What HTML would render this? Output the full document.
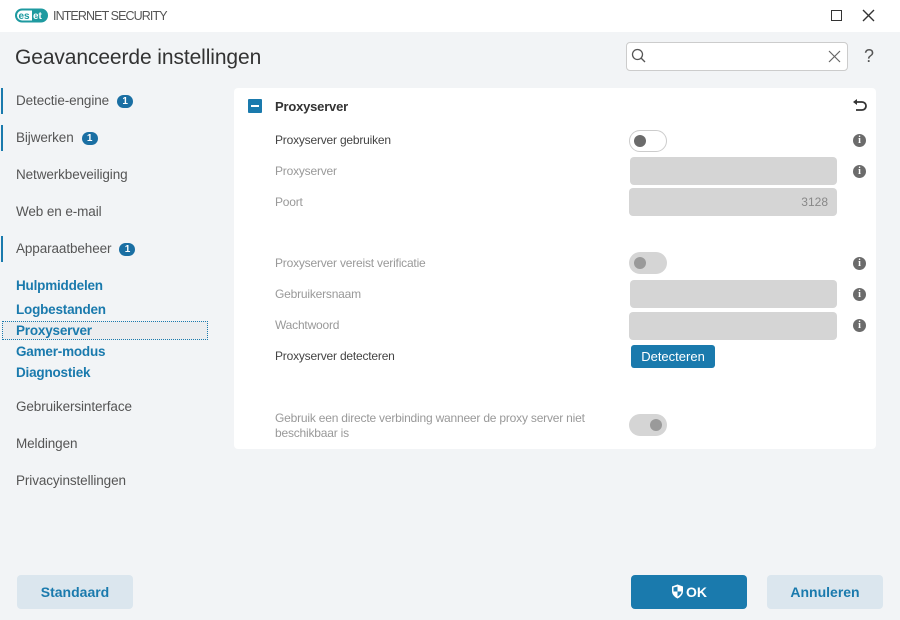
<!DOCTYPE html>
<html><head><meta charset="utf-8"><style>
*{margin:0;padding:0;box-sizing:border-box}
body{width:900px;height:620px;background:#f2f4f6;font-family:"Liberation Sans",sans-serif;position:relative;overflow:hidden;color:#3a3a3a}
.a{position:absolute;white-space:nowrap}
.nav{font-size:13.5px;color:#555;letter-spacing:-0.1px}
.bar{position:absolute;left:1px;width:2px;background:#1a7aad}
.badge{display:inline-block;background:#1a6fa3;color:#fff;font-size:10px;font-weight:bold;border-radius:7px;width:16px;height:13px;line-height:13px;text-align:center;margin-left:8px;vertical-align:1px}
.sub{font-size:13.5px;color:#1a7aad;font-weight:bold;letter-spacing:-0.2px}
.lbl{font-size:12px;letter-spacing:-0.2px;color:#999}
.dk{color:#444}
.inp{position:absolute;left:630px;width:207px;height:28px;background:#d5d5d5;border-radius:4px}
.info{position:absolute;left:853px;width:13px;height:13px;border-radius:50%;background:#6b6b6b;color:#fff;font:bold 10px/13px "Liberation Serif",serif;text-align:center}
.tg{position:absolute;left:629px;width:38px;height:22px;border-radius:11px}
.knob{position:absolute;top:5px;width:12px;height:12px;border-radius:50%}
.btn{position:absolute;height:34px;border-radius:4px;font-size:14px;font-weight:bold;text-align:center;line-height:34px}
</style></head><body>
<div class="a" style="left:0;top:0;width:900px;height:32px;background:#fff"></div>
<svg class="a" style="left:15px;top:8px" width="34" height="16" viewBox="0 0 34 16"><rect x="1" y="1.5" width="31" height="12" rx="6" fill="#fff" stroke="#1e9aa0" stroke-width="2"/><rect x="17" y="1.5" width="15" height="12" rx="6" fill="#1e9aa0"/><rect x="17" y="1.5" width="6" height="12" fill="#1e9aa0"/><text x="3.5" y="11" font-family="Liberation Sans" font-weight="bold" font-size="10" fill="#1e9aa0">es</text><text x="18" y="11" font-family="Liberation Sans" font-weight="bold" font-size="10" fill="#fff">et</text></svg>
<div class="a" style="left:53px;top:9px;font-size:12.5px;color:#555;letter-spacing:-0.9px">INTERNET SECURITY</div>
<div class="a" style="left:831px;top:10px;width:11px;height:11px;border:1.5px solid #333"></div>
<svg class="a" style="left:862px;top:9px" width="13" height="13"><path d="M1 1L12 12M12 1L1 12" stroke="#333" stroke-width="1.4"/></svg>

<div class="a" style="left:15px;top:46px;font-size:21px;color:#333;letter-spacing:-0.1px">Geavanceerde instellingen</div>
<div class="a" style="left:626px;top:42px;width:222px;height:29px;background:#fff;border:1px solid #ccc;border-radius:4px"></div>
<svg class="a" style="left:631px;top:48px" width="16" height="16"><circle cx="6.5" cy="6.5" r="5" fill="none" stroke="#555" stroke-width="1.3"/><line x1="10" y1="10" x2="14" y2="14" stroke="#555" stroke-width="1.3"/></svg>
<svg class="a" style="left:828px;top:50px" width="13" height="13"><path d="M1 1L12 12M12 1L1 12" stroke="#666" stroke-width="1.2"/></svg>
<div class="a" style="left:864px;top:46px;font-size:18px;color:#555">?</div>

<div class="bar" style="top:88px;height:26px"></div>
<div class="a nav" style="left:16px;top:93px">Detectie-engine<span class="badge">1</span></div>
<div class="bar" style="top:125px;height:26px"></div>
<div class="a nav" style="left:16px;top:130px">Bijwerken<span class="badge">1</span></div>
<div class="a nav" style="left:16px;top:167px">Netwerkbeveiliging</div>
<div class="a nav" style="left:16px;top:204px">Web en e-mail</div>
<div class="bar" style="top:236px;height:26px"></div>
<div class="a nav" style="left:16px;top:241px">Apparaatbeheer<span class="badge">1</span></div>
<div class="a sub" style="left:16px;top:278px">Hulpmiddelen</div>
<div class="a sub" style="left:16px;top:302px">Logbestanden</div>
<div class="a" style="left:2px;top:321px;width:206px;height:19px;background:#ebedef;border:1px dotted #1a7aad"></div>
<div class="a sub" style="left:16px;top:323px">Proxyserver</div>
<div class="a sub" style="left:16px;top:344px">Gamer-modus</div>
<div class="a sub" style="left:16px;top:365px">Diagnostiek</div>
<div class="a nav" style="left:16px;top:399px">Gebruikersinterface</div>
<div class="a nav" style="left:16px;top:436px">Meldingen</div>
<div class="a nav" style="left:16px;top:473px">Privacyinstellingen</div>

<div class="a" style="left:234px;top:88px;width:642px;height:361px;background:#fff;border-radius:4px"></div>
<div class="a" style="left:248px;top:99px;width:14px;height:14px;background:#1a7aad;border-radius:1px"><div style="margin:6px 3px;width:8px;height:2px;background:#fff"></div></div>
<div class="a" style="left:275px;top:99px;font-size:13px;font-weight:bold;color:#333;letter-spacing:-0.2px">Proxyserver</div>
<svg class="a" style="left:852px;top:98px" width="16" height="16"><path d="M4 4h6a4 4 0 0 1 0 8H4" fill="none" stroke="#333" stroke-width="1.8"/><path d="M1 4l4-3v6z" fill="#333"/></svg>

<div class="a lbl dk" style="left:275px;top:133px">Proxyserver gebruiken</div>
<div class="tg" style="top:130px;border:1.5px solid #ccc;background:#fff"><div class="knob" style="left:4px;top:3.5px;background:#6b6b6b"></div></div>
<div class="info" style="top:134px">i</div>
<div class="a lbl" style="left:275px;top:164px">Proxyserver</div>
<div class="inp" style="top:157px"></div>
<div class="info" style="top:165px">i</div>
<div class="a lbl" style="left:275px;top:195px">Poort</div>
<div class="inp" style="top:188px;left:629px;width:208px"></div>
<div class="a" style="left:790px;top:195px;font-size:12px;color:#888;width:38px;text-align:right">3128</div>

<div class="a lbl" style="left:275px;top:256px">Proxyserver vereist verificatie</div>
<div class="tg" style="top:252px;background:#d5d5d5"><div class="knob" style="left:5px;background:#9a9a9a"></div></div>
<div class="info" style="top:257px">i</div>
<div class="a lbl" style="left:275px;top:287px">Gebruikersnaam</div>
<div class="inp" style="top:280px"></div>
<div class="info" style="top:288px">i</div>
<div class="a lbl" style="left:275px;top:318px">Wachtwoord</div>
<div class="inp" style="top:312px;left:629px;width:208px"></div>
<div class="info" style="top:319px">i</div>
<div class="a lbl dk" style="left:275px;top:349px">Proxyserver detecteren</div>
<div class="btn" style="left:631px;top:345px;width:84px;height:23px;line-height:23px;background:#1a7aad;color:#fff;font-size:13px;font-weight:normal;border-radius:3px">Detecteren</div>

<div class="a lbl" style="left:275px;top:411px;line-height:15px">Gebruik een directe verbinding wanneer de proxy server niet<br>beschikbaar is</div>
<div class="tg" style="top:414px;background:#d5d5d5"><div class="knob" style="left:21px;background:#9a9a9a"></div></div>

<div class="btn" style="left:17px;top:575px;width:116px;background:#dbe6ee;color:#1a7aad">Standaard</div>
<div class="btn" style="left:631px;top:575px;width:116px;background:#1a7aad;color:#fff"><svg width="13" height="15" style="vertical-align:-2px;margin-right:2px" viewBox="0 0 13 15"><path d="M6.5 0.5L12 2.5V7c0 3.5-2.5 6-5.5 7.5C3.5 13 1 10.5 1 7V2.5z" fill="#fff"/><path d="M6.5 2.5V7.5H2.5V3.5z M6.5 7.5H10.5c-0.3 2.5-2 4-4 5z" fill="#1a7aad"/></svg>OK</div>
<div class="btn" style="left:767px;top:575px;width:116px;background:#dbe6ee;color:#1a7aad">Annuleren</div>
</body></html>
